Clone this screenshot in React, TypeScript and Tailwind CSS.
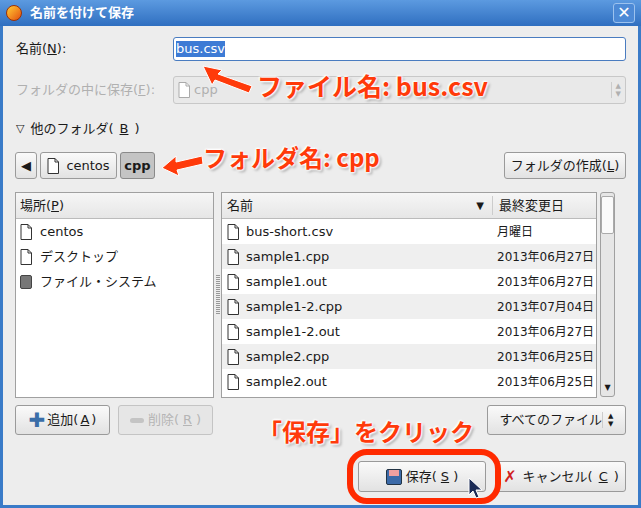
import React from "react";

const F = { fontFamily: '"DejaVu Sans","Noto Sans CJK JP",sans-serif' };
const A = { fontFamily: '"Noto Sans CJK JP",sans-serif', textShadow: "0 0 3px #fff,0 0 3px #fff,1px 1px 2px #fff,-1px -1px 2px #fff,2px 2px 3px rgba(0,0,0,0.4)" };

const Doc = ({ c = "#333" }: { c?: string }) => (
  <svg width="12" height="16" viewBox="0 0 12 16"><path d="M1 .5h7l3.5 3.5v11.5h-10.5z" fill="#fff" stroke={c} /><path d="M8 .5v3.5h3.5" fill="none" stroke={c} /></svg>
);

const U = ({ c }: { c: string }) => <span className="underline">{c}</span>;

const Btn = ({ children, cls = "" }: { children: React.ReactNode; cls?: string }) => (
  <div className={`flex items-center justify-center rounded-[3px] border border-[#9a9a9a] bg-gradient-to-b from-[#fafafa] to-[#e2e2e2] text-[13px] text-[#1a1a1a] ${cls}`}>{children}</div>
);

const files = [
  ["bus-short.csv", "月曜日"],
  ["sample1.cpp", "2013年06月27日"],
  ["sample1.out", "2013年06月27日"],
  ["sample1-2.cpp", "2013年07月04日"],
  ["sample1-2.out", "2013年06月27日"],
  ["sample2.cpp", "2013年06月25日"],
  ["sample2.out", "2013年06月25日"],
];

export default function App() {
  return (
    <div style={F} className="relative w-[641px] h-[508px] overflow-hidden bg-[#3a7bc8] text-[13px] text-[#1a1a1a]">
      <div className="h-[26px] flex items-center px-[6px] bg-gradient-to-b from-[#5c9ae0] to-[#2f6fc0] text-white">
        <div className="w-[16px] h-[16px] rounded-full bg-gradient-to-br from-[#ffcc33] to-[#e04a10] border border-[#a03000]" />
        <span className="ml-[8px] text-[13px] font-bold">名前を付けて保存</span>
        <div className="ml-auto w-[22px] h-[20px] rounded-[3px] border border-[#9cc2ee] bg-[#4d8ad6] flex items-center justify-center text-[16px] font-bold">✕</div>
      </div>
      <div className="absolute left-[3px] right-[3px] top-[26px] bottom-[3px] bg-[#ededed] px-[12px]">
        <div className="flex items-center mt-[11px] h-[24px]">
          <span className="w-[158px] pl-[1px]">名前(<U c="N" />):</span>
          <div className="flex-1 h-[24px] rounded-[3px] border border-[#4a7cc0] bg-white flex items-center px-[2px]"><span className="bg-[#3d7bd5] text-white leading-[16px]">bus.csv</span></div>
        </div>
        <div className="flex items-center mt-[15px] h-[28px] text-[#b0b0b0]">
          <span className="w-[158px] pl-[1px]">フォルダの中に保存(<U c="F" />):</span>
          <div className="flex-1 h-[28px] rounded-[3px] border border-[#c8c8c8] bg-[#e9e9e9] flex items-center px-[4px] gap-[4px]"><Doc c="#aaa" /><span>cpp</span><span className="ml-auto border-l border-[#ccc] pl-[4px] text-[7px] leading-[8px]">▲<br />▼</span></div>
        </div>
        <div className="mt-[15px] h-[20px] flex items-center gap-[6px] pl-[1px]"><span className="text-[11px]">▽</span>他のフォルダ(<U c="B" />)</div>
        <div className="flex items-center mt-[13px] h-[27px]">
          <Btn cls="w-[22px] h-[27px] text-[8px]">◀</Btn>
          <Btn cls="ml-[3px] w-[77px] h-[27px] gap-[7px]"><Doc />centos</Btn>
          <div className="ml-[3px] w-[35px] h-[27px] rounded-[3px] border border-[#8a8a8a] bg-[#c4c4c4] flex items-center justify-center font-bold">cpp</div>
          <Btn cls="ml-auto w-[122px] h-[27px]">フォルダの作成(<U c="L" />)</Btn>
        </div>
        <div className="flex mt-[13px] h-[206px]">
          <div className="w-[199px] border border-[#a0a0a0] bg-white flex flex-col">
            <div className="h-[26px] bg-gradient-to-b from-[#f6f6f6] to-[#e6e6e6] border-b border-[#bbb] flex items-center px-[4px]">場所(<U c="P" />)</div>
            {[["centos", 0], ["デスクトップ", 0], ["ファイル・システム", 1]].map(([n, d]) => (
              <div key={n as string} className="h-[25px] flex items-center gap-[8px] px-[4px]">
                {d ? <div className="w-[12px] h-[14px] rounded-[2px] bg-[#777] border border-[#444]" /> : <Doc />}
                {n}
              </div>
            ))}
          </div>
          <div className="w-[7px] flex items-center justify-center"><div className="w-[4px] h-[40px] bg-[repeating-linear-gradient(#999_0,#999_1px,transparent_1px,transparent_2px)]" /></div>
          <div className="w-[376px] border border-[#a0a0a0] bg-white flex flex-col overflow-hidden">
            <div className="h-[26px] shrink-0 bg-gradient-to-b from-[#f6f6f6] to-[#e6e6e6] border-b border-[#bbb] flex items-center">
              <span className="pl-[5px] flex-1">名前</span>
              <span className="text-[10px] pr-[8px]">▼</span>
              <span className="w-[104px] border-l border-[#ccc] pl-[6px]">最終変更日</span>
            </div>
            {files.map(([n, d], i) => (
              <div key={n} className={`h-[25px] shrink-0 flex items-center ${i % 2 ? "bg-[#efefef]" : "bg-white"}`}>
                <span className="pl-[5px] flex items-center gap-[7px] flex-1"><Doc />{n}</span>
                <span className="w-[104px] pl-[5px] text-[12px]">{d}</span>
              </div>
            ))}
          </div>
          <div className="ml-[3px] w-[15px] h-[205px] rounded-[3px] border border-[#a0a0a0] bg-[#e6e6e6] flex flex-col items-center justify-between text-[8px] py-[2px]">
            <span className="text-[#bbb]">▲</span>
            <div className="w-[13px] h-[38px] -mt-[160px] bg-[#fafafa] border border-[#aaa] rounded-[2px]" />
            <span>▼</span>
          </div>
        </div>
        <div className="flex mt-[7px] h-[30px]">
          <Btn cls="w-[95px] h-[30px] gap-[2px]"><span className="text-[#3a6ea8] text-[20px] font-bold leading-none">✚</span>追加(<U c="A" />)</Btn>
          <div className="ml-[8px] w-[95px] h-[30px] rounded-[3px] border border-[#c4c4c4] bg-[#e6e6e6] text-[#b5b5b5] flex items-center justify-center gap-[4px]"><span className="w-[14px] h-[5px] rounded bg-[#c4c4c4]" />削除(<U c="R" />)</div>
          <Btn cls="ml-auto w-[139px] h-[30px] justify-between px-[8px]">すべてのファイル<span className="border-l border-[#ccc] pl-[5px] text-[7px] leading-[8px]">▲<br />▼</span></Btn>
        </div>
        <div className="flex justify-end mt-[26px] gap-[10px]">
          <Btn cls="w-[128px] h-[31px] gap-[4px]"><div className="w-[16px] h-[16px] rounded-[2px] bg-[#3b6aa8] border border-[#234]"><div className="mx-[2px] h-[6px] bg-[#f0a0a0]" /></div>保存(<U c="S" />)</Btn>
          <Btn cls="w-[130px] h-[31px] gap-[6px]"><span className="text-[#d02020] text-[16px] font-bold">✗</span>キャンセル(<U c="C" />)</Btn>
        </div>
      </div>
      <div className="absolute left-[347px] top-[449px] w-[154px] h-[55px] rounded-[20px] border-[6px] border-[#ff2a00]" />
      <svg className="absolute left-[468px] top-[477px]" width="16" height="22" viewBox="0 0 16 22"><path d="M1 1v17l4-4 3 7 3-1-3-7h6z" fill="#1a2a55" stroke="#fff" /></svg>
      <svg className="absolute left-0 top-0" width="641" height="508" style={{ pointerEvents: "none" }}>
        <g fill="#ff3a0a" stroke="#fff" strokeWidth="1">
          <path d="M203 66 L222 70 L218 74 L252 86 L249 93 L215 80 L212 85 Z" />
          <path d="M162 168 L176 156 L176 162 L202 156 L203 164 L177 170 L179 176 Z" />
        </g>
      </svg>
      <div style={A} className="absolute left-[257px] top-[73px] text-[25px] font-bold text-[#ff3a0a] leading-none">ファイル名: bus.csv</div>
      <div style={A} className="absolute left-[203px] top-[145px] text-[24px] font-bold text-[#ff3a0a] leading-none">フォルダ名: cpp</div>
      <div style={A} className="absolute left-[258px] top-[419px] text-[24px] font-bold text-[#ff3a0a] leading-none">「保存」をクリック</div>
    </div>
  );
}
